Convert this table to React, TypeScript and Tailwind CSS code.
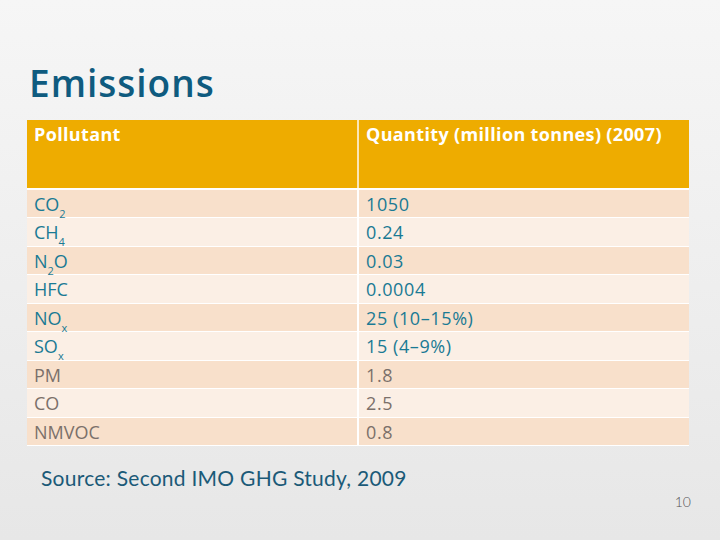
import React from 'react'

const sub = 'text-[11px] align-[-4px]'

const rows = [
    { name: <>CO<sub className={sub}>2</sub></>, qty: '1050', main: true },
    { name: <>CH<sub className={sub}>4</sub></>, qty: '0.24', main: true },
    { name: <>N<sub className={sub}>2</sub>O</>, qty: '0.03', main: true },
    { name: <>HFC</>, qty: '0.0004', main: true },
    { name: <>NO<sub className={sub}>x</sub></>, qty: '25 (10–15%)', main: true },
    { name: <>SO<sub className={sub}>x</sub></>, qty: '15 (4–9%)', main: true },
    { name: <>PM</>, qty: '1.8', main: false },
    { name: <>CO</>, qty: '2.5', main: false },
    { name: <>NMVOC</>, qty: '0.8', main: false },
]

export default function App() {
    return (
        <div
            className="w-[720px] h-[540px] flex flex-col bg-gradient-to-b from-[#f6f6f6] to-[#e7e7e7] overflow-hidden"
            style={{ fontFamily: '"Open Sans", "Noto Sans", sans-serif' }}
        >
            <h1 className="pl-[29px] pt-[58px] text-[37px] leading-[50px] font-semibold text-[#0f5b7f] tracking-[1px]">
                Emissions
            </h1>

            {/* Table */}
            <div className="ml-[27px] mt-[12px] w-[662px] flex flex-col">
                <div className="flex h-[68px] bg-[#eeac00] text-white font-bold text-[18px] leading-[26px] tracking-[0.35px]">
                    <div className="w-[332px] pl-[7px] pt-[1px] border-r-2 border-[#fbe6b8]">Pollutant</div>
                    <div className="flex-1 pl-[7px] pt-[1px]">Quantity (million tonnes) (2007)</div>
                </div>
                <div className="h-[2px] bg-white" />
                {rows.map((r, i) => (
                    <div
                        key={i}
                        className={`flex h-[28.45px] text-[18px] leading-[28px] border-b border-white ${
                            i % 2 === 0 ? 'bg-[#f8e0cb]' : 'bg-[#fbefe5]'
                        } ${r.main ? 'text-[#1a7a94]' : 'text-[#7b706a]'}`}
                    >
                        <div className="w-[332px] pl-[7px] border-r-2 border-white">{r.name}</div>
                        <div className="flex-1 pl-[7px] tracking-[0.6px]">{r.qty}</div>
                    </div>
                ))}
            </div>

            <div
                className="pl-[41px] mt-[18px] text-[21px] leading-[28px] text-[#1b5a78] tracking-[0.25px]"
                style={{ fontFamily: 'Lato, "Open Sans", sans-serif' }}
            >
                Source: Second IMO GHG Study, 2009
            </div>
            <div
                className="pr-[29px] mt-[2px] text-right text-[14px] leading-[16px] font-light text-[#555555]"
                style={{ fontFamily: 'Lato, "Open Sans", sans-serif' }}
            >
                10
            </div>
        </div>
    )
}
